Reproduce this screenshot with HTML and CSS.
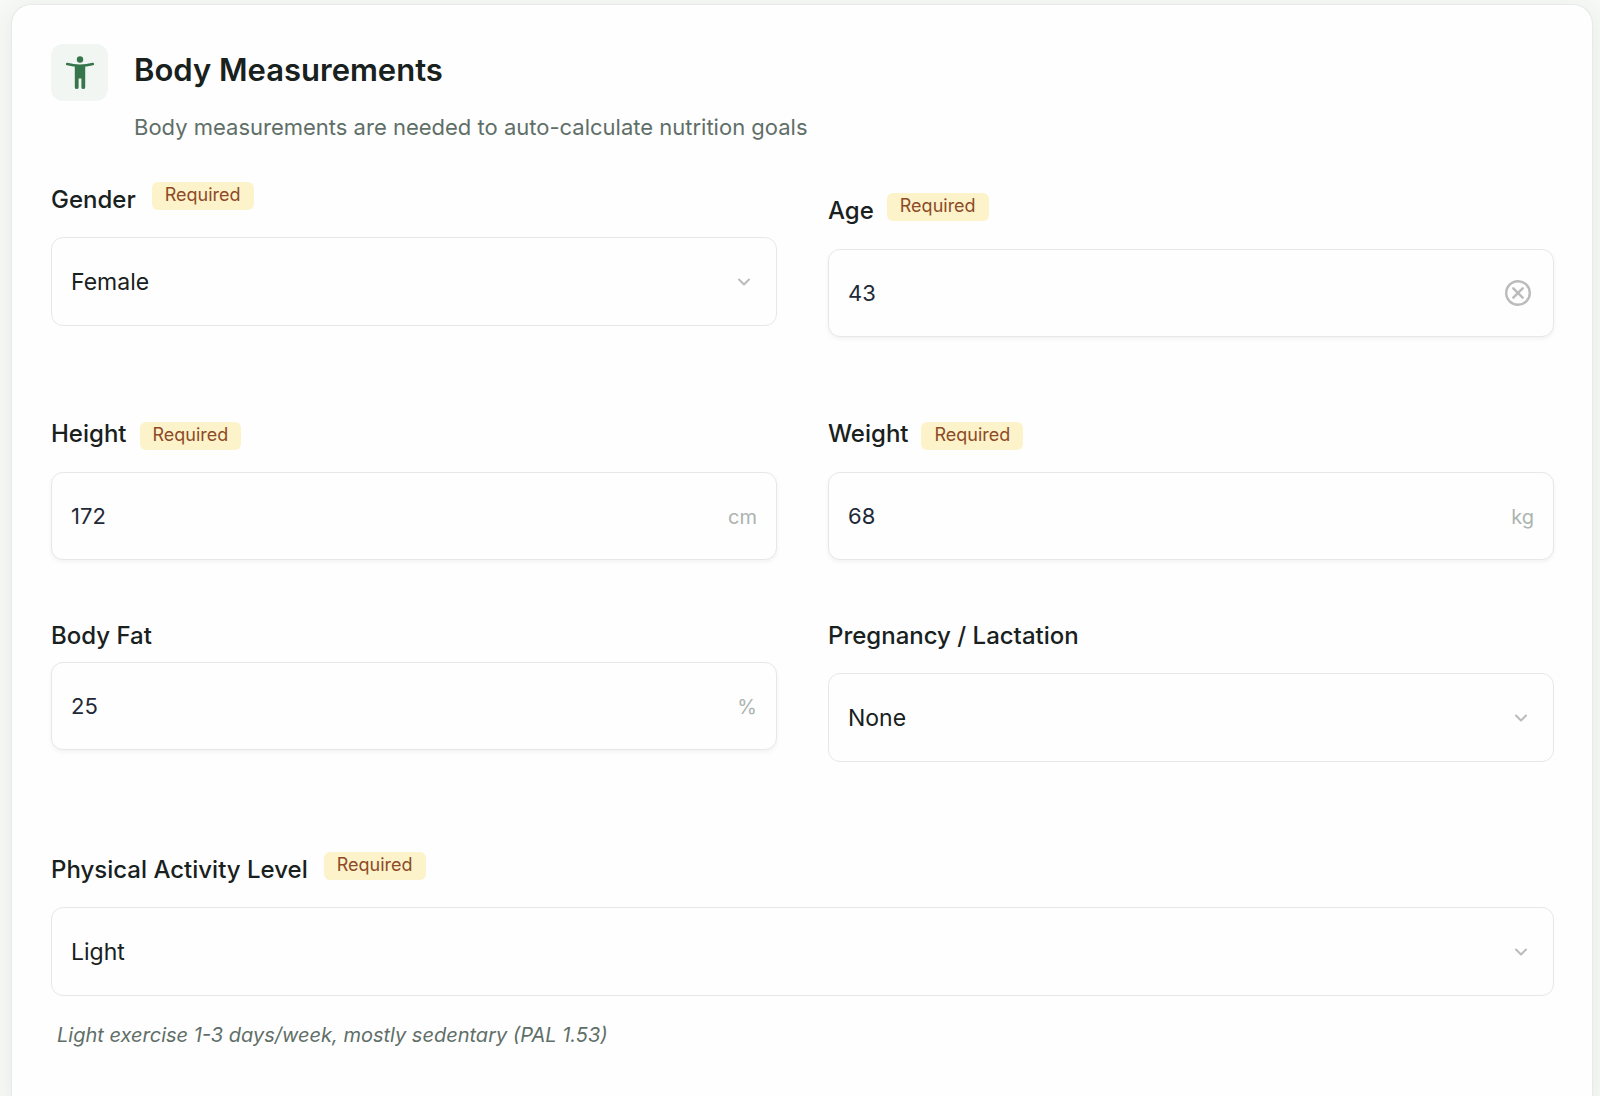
FILE: index.html
```html
<!DOCTYPE html>
<html lang="en">
<head>
<meta charset="utf-8">
<meta name="viewport" content="width=device-width, initial-scale=1">
<title>Body Measurements</title>
<link rel="stylesheet" href="styles.css">
</head>
<body>
<main class="card">
  <header class="card-header">
    <span class="card-icon">
      <svg width="32" height="36" viewBox="0 0 32 36" aria-hidden="true">
        <circle cx="16" cy="4.5" r="3.2"/>
        <path class="arms" d="M3.2 9.1Q9.5 10.8 16 10.8T28.8 9.1"/>
        <path d="M10.8 10.5h10.4v21.7a1.7 1.7 0 0 1-3.8 0v-8.6h-2.8v8.6a1.7 1.7 0 0 1-3.8 0z"/>
      </svg>
    </span>
    <div class="card-heading">
      <h1 class="card-title">Body Measurements</h1>
      <p class="card-subtitle">Body measurements are needed to auto-calculate nutrition goals</p>
    </div>
  </header>

  <form class="form">
    <div class="field field-select">
      <div class="label-row">
        <label class="label" for="gender">Gender</label>
        <span class="badge">Required</span>
      </div>
      <div class="control">
        <select class="input" id="gender"><option>Female</option><option>Male</option></select>
        <svg class="chevron" width="14" height="9" viewBox="0 0 14 9" aria-hidden="true"><path d="M2 2l5 5 5-5"/></svg>
      </div>
    </div>

    <div class="field field-clearable">
      <div class="label-row">
        <label class="label" for="age">Age</label>
        <span class="badge">Required</span>
      </div>
      <div class="control">
        <input class="input input-number" id="age" type="text" inputmode="numeric" value="43">
        <button class="clear" type="button" aria-label="Clear age">
          <svg width="26" height="26" viewBox="0 0 26 26" aria-hidden="true"><circle cx="13" cy="13" r="11.8"/><path d="M8.3 8.3l9.4 9.4M17.7 8.3l-9.4 9.4"/></svg>
        </button>
      </div>
    </div>

    <div class="field">
      <div class="label-row">
        <label class="label" for="height">Height</label>
        <span class="badge">Required</span>
      </div>
      <div class="control">
        <input class="input input-number" id="height" type="text" inputmode="decimal" value="172">
        <span class="unit">cm</span>
      </div>
    </div>

    <div class="field">
      <div class="label-row">
        <label class="label" for="weight">Weight</label>
        <span class="badge">Required</span>
      </div>
      <div class="control">
        <input class="input input-number" id="weight" type="text" inputmode="decimal" value="68">
        <span class="unit">kg</span>
      </div>
    </div>

    <div class="field field-compact">
      <div class="label-row">
        <label class="label" for="body-fat">Body Fat</label>
      </div>
      <div class="control">
        <input class="input input-number" id="body-fat" type="text" inputmode="decimal" value="25">
        <span class="unit">%</span>
      </div>
    </div>

    <div class="field field-plain-select">
      <div class="label-row">
        <label class="label" for="pregnancy">Pregnancy / Lactation</label>
      </div>
      <div class="control">
        <select class="input" id="pregnancy"><option>None</option><option>Pregnant</option><option>Lactating</option></select>
        <svg class="chevron" width="14" height="9" viewBox="0 0 14 9" aria-hidden="true"><path d="M2 2l5 5 5-5"/></svg>
      </div>
    </div>

    <div class="field field-select field-wide">
      <div class="label-row">
        <label class="label" for="activity">Physical Activity Level</label>
        <span class="badge">Required</span>
      </div>
      <div class="control">
        <select class="input" id="activity" aria-describedby="activity-hint"><option>Light</option><option>Moderate</option><option>Active</option></select>
        <svg class="chevron" width="14" height="9" viewBox="0 0 14 9" aria-hidden="true"><path d="M2 2l5 5 5-5"/></svg>
      </div>
      <p class="hint" id="activity-hint">Light exercise 1-3 days/week, mostly sedentary (PAL 1.53)</p>
    </div>
  </form>
</main>
</body>
</html>
```
FILE: styles.css
```css
* {
  box-sizing: border-box;
}

body {
  margin: 0;
  background: #f7f9f6;
  color: #18211d;
  font-family: Inter, "Liberation Sans", sans-serif;
}

.card {
  min-height: 100vh;
  margin: 4px 7px 0 11px;
  padding: 39px 38px 56px 39px;
  background: #fefefe;
  border: 1px solid #e6eae8;
  border-bottom: 0;
  border-radius: 20px 20px 0 0;
  box-shadow: 0 4px 24px rgba(30, 60, 50, 0.08);
}

.card-header {
  display: flex;
  align-items: flex-start;
  gap: 26px;
}

.card-icon {
  display: flex;
  flex: none;
  align-items: center;
  justify-content: center;
  width: 57px;
  height: 57px;
  border-radius: 12px;
  background: #f2f6f3;
}

.card-icon svg {
  fill: #37764b;
}

.card-icon .arms {
  fill: none;
  stroke: #37764b;
  stroke-width: 2.6;
  stroke-linecap: round;
}

.card-title {
  margin: 5px 0 0;
  font-size: 31px;
  line-height: 42px;
  font-weight: 600;
}

.card-subtitle {
  margin: 20px 0 0;
  color: #5f6f68;
  font-size: 22px;
  line-height: 33px;
}

.form {
  display: grid;
  grid-template-columns: 1fr 1fr;
  align-items: start;
  gap: 64px 51px;
  margin-top: 38px;
}

.field-wide {
  grid-column: 1 / -1;
}

.label-row {
  display: flex;
  align-items: flex-start;
  gap: 13px;
  height: 50px;
}

.label {
  font-size: 24px;
  line-height: 24px;
  font-weight: 500;
}

.field-select .label-row {
  gap: 16px;
  height: 55px;
}

.field-select .label,
.field-clearable .label {
  padding-top: 6px;
}

.field-clearable {
  padding: 11px 0 21px;
}

.field-clearable .label-row {
  height: 56px;
}

.field-compact .label-row {
  height: 38px;
}

.field-plain-select {
  padding-bottom: 26px;
}

.field-plain-select .label-row {
  height: 49px;
}

.badge {
  padding: 0 13px 2px;
  border-radius: 6px;
  background: #fcf3cb;
  color: #8e4a25;
  font-size: 18px;
  line-height: 26px;
}

.control {
  position: relative;
}

.input {
  display: block;
  width: 100%;
  height: 89px;
  margin: 0;
  padding: 0 60px 0 19px;
  border: 1px solid #e6e8e7;
  border-radius: 12px;
  outline: 0;
  appearance: none;
  background: #fefefe;
  color: #18211d;
  font: inherit;
  font-size: 23px;
}

.input-number {
  height: 88px;
  color: #1f2937;
  font-size: 22px;
  box-shadow: 0 2px 4px rgba(0, 0, 0, 0.05);
}

.unit,
.chevron,
.clear {
  position: absolute;
  top: 50%;
  right: 20px;
  transform: translateY(-50%);
}

.unit {
  padding-top: 2px;
  color: #abb4b0;
  font-size: 20px;
  line-height: 24px;
}

.chevron {
  right: 26px;
  fill: none;
  stroke: #bbb;
  stroke-width: 2;
  stroke-linecap: round;
  stroke-linejoin: round;
  pointer-events: none;
}

.clear {
  right: 23px;
  padding: 0;
  border: 0;
  background: none;
}

.clear svg {
  display: block;
  fill: none;
  stroke: #bbb;
  stroke-width: 2.4;
  stroke-linecap: round;
}

.hint {
  margin: 24px 0 0;
  padding-left: 6px;
  color: #5f6f68;
  font-size: 20px;
  line-height: 30px;
  font-style: italic;
}
```
